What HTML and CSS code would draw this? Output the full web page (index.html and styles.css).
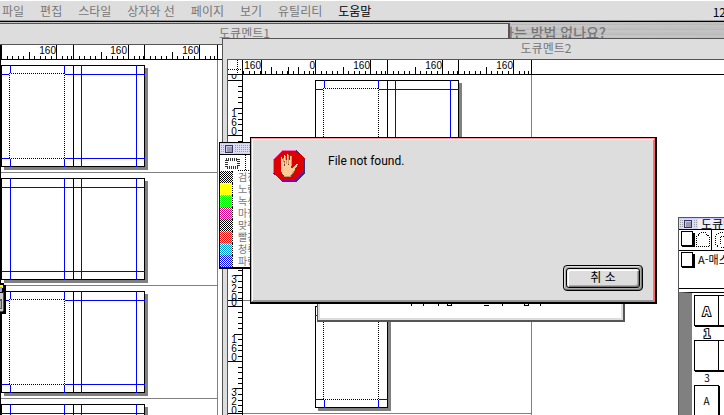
FILE: index.html
```html
<!DOCTYPE html>
<html lang="ko">
<head>
<meta charset="utf-8">
<title>도큐멘트</title>
<link rel="stylesheet" href="styles.css">
</head>
<body>
<svg class="defs" width="0" height="0" aria-hidden="true">
  <defs>
    <!-- horizontal ruler, one page wide -->
    <g id="hticks"><path class="ink" d="M.5 0V15M6.5 11V15M11.5 11V15M17.5 11V15M22.5 11V15M28.5 7V15M33.5 11V15M39.5 11V15M44.5 11V15M50.5 11V15M55.5 0V15M61.5 11V15M66.5 11V15M70.5 11V15"/></g>
    <!-- vertical ruler, one page high -->
    <g id="vticks"><path class="ink" d="M0 .5H14M10 6.5H14M10 11.5H14M10 17.5H14M10 22.5H14M6 28.5H14M10 33.5H14M10 39.5H14M10 44.5H14M10 50.5H14M0 55.5H14M10 61.5H14M10 66.5H14M10 72.5H14M10 77.5H14M6 82.5H14M10 88.5H14M10 94.5H14M10 99.5H14M10 105.5H14M0 107.5H14"/>
      <g class="num"><text x="6" y="37">1</text><text x="6" y="46">6</text><text x="6" y="55">0</text><text x="6" y="90">3</text><text x="6" y="99">2</text><text x="6" y="108">0</text></g></g>
    <g id="sheet"><path fill="#808080" d="M3 3H147V105H3z"/><path fill="#fff" d="M0 0H144V102H0z"/><path class="ink" d="M.5 .5H143.5V101.5H.5zM72.5 0V102"/></g>
    <g id="spread"><use href="#sheet"/><path class="guide" d="M9.5 0V102M63.5 0V102M80.5 0V102M135.5 0V102M0 9.5H144M0 93.5H144"/></g>
    <g id="leftguides"><path class="guide" d="M9.5 0V8M63.5 0V8M9.5 94V102M63.5 94V102M0 9.5H8M0 93.5H8"/><path class="dots" d="M8 8.5H64M8 93.5H64M8.5 8V94M63.5 8V94"/></g>
    <g id="framed"><use href="#sheet"/><use href="#leftguides"/><path class="guide" d="M80.5 0V102M135.5 0V102M64 9.5H144M64 93.5H144"/></g>
    <g id="single"><path fill="#808080" d="M3 3H76V105H3z"/><path fill="#fff" d="M0 0H73V102H0z"/><path class="ink" d="M.5 .5H72.5V101.5H.5z"/><use href="#leftguides"/><path class="guide" d="M64 9.5H73M64 93.5H73"/></g>
  </defs>
</svg>

<nav class="menubar">
  <button>파일</button><button>편집</button><button>스타일</button><button>상자와 선</button><button>페이지</button><button>보기</button><button>유틸리티</button><button class="active">도움말</button>
  <span class="clock">12</span>
</nav>

<main class="desktop">
  <p class="banner">하는 방법 없나요?</p>

  <section class="window doc1">
    <h2 class="title">도큐멘트1</h2>
    <svg class="ruler" height="15" width="222">
      <use href="#hticks" x="1"/><use href="#hticks" x="73"/><use href="#hticks" x="144"/>
      <path fill="#fff" d="M218 0H222V15H218z"/>
      <g class="num end"><text x="56" y="9">160</text><text x="127" y="9">160</text><text x="199" y="9">160</text></g>
      <path class="ink" d="M0 14.5H222M.5 0V15M217.5 0V15"/>
    </svg>
    <svg class="canvas" width="222" height="356">
      <path class="rule" d="M217.5 0V356M0 112.5H217M0 225.5H217M0 338.5H217"/>
      <use href="#framed" x="1" y="5"/><use href="#spread" x="1" y="118"/><use href="#framed" x="1" y="231"/><use href="#spread" x="1" y="344"/>
      <path class="ink" d="M.5 0V356"/>
      <g><path fill="#000" d="M0 223H4V225H6V254H0z"/><path fill="#ff0" d="M0 225H3V228H0z"/><path fill="#99f" d="M0 227H2V232H0z"/><path fill="#ccc" d="M0 233H3V251H0z"/><path fill="#33f" d="M3 232H4V251H3z"/><path fill="#f00" d="M0 251H3V252H0z"/><path fill="#555" d="M0 239H2V249H0z"/><path fill="#aaa" d="M0 241H1V248H0z"/></g>
    </svg>
  </section>

  <section class="window doc2">
    <h2 class="title">도큐멘트2</h2>
    <div class="pane">
      <svg class="corner" width="15" height="15"><path class="dots" d="M0 9.5H14M9.5 0V14"/><path class="ink" d="M0 14.5H15M14.5 0V15"/></svg>
      <div class="hruler"><svg width="290" height="15">
        <use href="#hticks" x="0"/><use href="#hticks" x="72"/><use href="#hticks" x="144"/><use href="#hticks" x="215"/>
        <path fill="#fff" d="M0 0H17V11H0zM19 0H71V7H19z"/>
        <path class="ink" d="M18.5 0V15M45.5 7V15M288.5 0V15"/>
        <g class="num end"><text x="18" y="9">160</text><text x="72" y="9">0</text><text x="127" y="9">160</text><text x="199" y="9">160</text><text x="270" y="9">160</text></g>
      </svg></div>
      <svg class="vruler" width="15" height="340">
        <g class="num"><text x="6" y="4">0</text><text x="6" y="231">0</text></g>
        <use href="#vticks" y="5"/><use href="#vticks" y="118"/><use href="#vticks" y="231"/>
        <path class="ink" d="M14.5 0V340"/>
      </svg>
      <svg class="canvas" width="290" height="340">
        <path class="rule" d="M288.5 0V340M0 225.5H288M0 338.5H288"/>
        <use href="#framed" x="72" y="5"/><use href="#single" x="72" y="231"/>
      </svg>
    </div>
  </section>

  <section class="palette colors">
    <header class="grip"><button class="close" aria-label="색상 팔레트 닫기"></button></header>
    <div class="tools"><svg width="30" height="16"><path class="thick" d="M6 4H18V12H6z"/><path class="dots" d="M25.5 0V16M18 15.5H30"/></svg></div>
    <ul>
      <li><i class="black"></i>검정</li><li><i class="yellow"></i>노랑</li><li><i class="green"></i>녹색</li><li><i class="magenta"></i>마젠타</li><li><i class="black"></i>맞춰</li><li><i class="red"></i>빨강</li><li><i class="cyan"></i>청록</li><li><i class="blue"></i>파랑</li>
    </ul>
  </section>

  <section class="window sheetbox">
    <svg width="300" height="14"><path class="ink" d="M71 .5H74M76 .5H78M91.5 0V3M103.500 0V3M118.5 0V3M119 .5H121M127.5 0V2.500H131.5V0M151 .5H153M155 .5H157M164 2.500H169M182.500 0V3M204.5 0V2.500H208.5V0M220.500 0V3M237 .5H238"/></svg>
  </section>

  <section class="palette layout">
    <header class="grip"><button class="close" aria-label="문서 배치 닫기"></button><b>도큐멘트2</b></header>
    <div class="icons"><svg width="60" height="20">
      <path fill="#000" d="M3 3H16V17H3z"/><path fill="#fff" stroke="#000" d="M2.500 1.500H13.500V15.500H2.500z"/>
      <path class="dotbox" d="M17.500 16.500V6.500L22.500 2.500H26.500L30.500 7.500V16.500z"/>
      <path class="ink" d="M32.500 0V20"/><path class="dotbox" d="M36.500 14.500V5.500L40.500 2.500H50M36.500 14.500L40.500 17.500H50M41.500 14V6.500H50"/></svg></div>
    <div class="master"><svg width="16" height="17"><path fill="#000" d="M3 3H16V17H3z"/><path fill="#fff" stroke="#000" d="M2.500 1.500H13.500V15.500H2.500z"/></svg><span>A-매스터</span></div>
    <div class="pages">
      <figure><div class="leafs"><span class="outline">A</span><span></span></div><figcaption class="outline">1</figcaption></figure>
      <figure><div class="leafs"><span></span><span></span></div><figcaption>3</figcaption></figure>
      <figure><div class="leafs"><span>A</span></div></figure>
    </div>
  </section>

  <section class="dialog" role="alertdialog" aria-labelledby="msg">
    <div class="face">
      <div class="alert">
        <svg width="32" height="32" viewBox="0 0 32 32">
          <path fill="#d00" d="M9 0H23L32 9V23L23 32H9L0 23V9z"/>
          <path fill="none" stroke="#f6b" d="M.5 23V9.500L9.500 .5H23"/>
          <path fill="none" stroke="#337" d="M23 .5L31.500 9.500V22.500L22.500 31.500H9"/>
          <path fill="none" stroke="#909" d="M.5 23L9 30.500H22L30.500 22"/>
          <path fill="#643" d="M8 7H10L11 14V5H13L14 13V4H16V13L17 5H19V15L20 18L23 14H25V16L22 21L19 26L17 27H11L9 25L8 20z"/>
          <path fill="#fc9" d="M8 7H9L11 14V16L12 16L11 5H12L14 14L14 4H15V15H16L17 6H18L18 17L19 19L23 14H25L21 21L18 25L16 26H11L9 24L8 19z"/>
          <path fill="none" stroke="#c96" d="M10 8L11.500 14M12.500 6L13.500 14M15.500 5V14M18.500 6V16M11 26.500H17L22 20"/>
        </svg>
        <p id="msg">File not found.</p>
      </div>
      <button class="cancel"><span>취 소</span></button>
    </div>
  </section>
</main>
</body>
</html>
```

FILE: styles.css
```css
* { box-sizing: border-box; }
body {
  margin: 0;
  height: 100vh;
  overflow: hidden;
  background: #fff;
  color: #000;
  font: 12px/18px "Noto Sans CJK KR", sans-serif;
}
button { font: inherit; color: inherit; padding: 0; border: 0; background: none; }
h2, p, ul, figure { margin: 0; padding: 0; font-size: 12px; font-weight: 400; }
svg { display: block; flex: none; shape-rendering: crispEdges; }
.defs { position: absolute; }
.ink { stroke: #000; fill: none; }
.guide { stroke: #00f; fill: none; }
.rule { stroke: #808080; fill: none; }
.dots, .dotbox { stroke: #000; fill: none; stroke-dasharray: 1 1; }
.thick { stroke: #333; stroke-width: 3; stroke-dasharray: 1 1; stroke-linejoin: round; fill: none; }
.num { font: 10px "Liberation Sans", sans-serif; text-anchor: middle; }
.num.end { text-anchor: end; }

.menubar {
  display: flex;
  gap: 16px;
  height: 22px;
  padding: 1px 0 0 2px;
  border-top: 1px solid #fff;
  border-bottom: 1px solid #000;
  background: #ddd;
  box-shadow: inset 0 -1px #999;
  color: #777;
}
.menubar button { white-space: nowrap; height: 18px; }
.menubar .active { color: #000; }
.clock { margin-left: auto; margin-right: -2px; color: #000; line-height: 20px; }

.desktop { position: absolute; top: 22px; right: 0; bottom: 0; left: 0; overflow: hidden; background: #ccc; }
.banner {
  height: 16px;
  padding-left: 501px;
  overflow: hidden;
  background: linear-gradient(90deg, #ddd0 510px, #bbb8 724px), repeating-linear-gradient(#c4c4c4 0 2px, #b8b8b8 2px 3px, #cacaca 3px 5px);
  color: #777;
  font-size: 14px;
  font-weight: 500;
  line-height: 20px;
}
.window { position: absolute; overflow: hidden; background: #fff; border: 1px solid #555; }
.title { height: 20px; line-height: 18px; background: #ddd; color: #777; text-align: center; }
.doc1 { left: 0; top: 1px; bottom: 0; width: 510px; border-width: 1px 2px 0 0; }
.doc1 .title { height: 21px; padding-right: 19px; border-bottom: 1px solid #555; }
.doc2 { left: 222px; right: 0; top: 16px; bottom: 0; border-width: 1px 0 0 1px; background: #ddd; }
.doc2 .title { padding-left: 145px; }
.pane {
  display: grid;
  grid-template: 15px 1fr / 15px 1fr;
  height: calc(100% - 20px);
  margin-left: 4px;
  border: solid #555;
  border-width: 1px 0 0 1px;
  background: #fff;
}
.hruler { border-bottom: 1px solid #000; overflow: hidden; }

.palette { position: absolute; overflow: hidden; background: #fff; border: 1px solid #000; }
.grip {
  display: flex;
  align-items: center;
  gap: 6px;
  height: 12px;
  padding-left: 5px;
  border-bottom: 1px solid #000;
  background: conic-gradient(#999 25%, #ddddf4 0) 0 0 / 2px 2px;
  box-shadow: inset 0 1px #ccf, inset 0 -1px #ccf;
}
.close { flex: none; width: 8px; height: 8px; border: 1px solid #336; background: #99a; box-shadow: inset 1px 1px #ccd, 0 0 0 1px #ddf; }
.colors { left: 219px; top: 120px; width: 60px; height: 127px; border-width: 1px 1px 2px; }
.colors ul { list-style: none; }
.colors li { display: flex; gap: 5px; height: 12px; line-height: 12px; font-size: 10px; overflow: hidden; white-space: nowrap; color: #777; }
.colors i { width: 13px; height: 12px; border-right: 1px dotted #000; background: repeating-conic-gradient(var(--c) 0 25%, #fff 0 50%) 0 0 / 2px 2px; }
.black { --c: #000; }
.yellow { --c: #ff0; }
.green { --c: #0f0; }
.magenta { --c: #d08; }
.red { --c: #f00; }
.cyan { --c: #09c; }
.blue { --c: #00f; }

.sheetbox { left: 317px; top: 272px; width: 308px; height: 28px; border-width: 1px 2px 2px 1px; padding: 8px 0 0 2px; box-shadow: inset 2px 0 #ddd, inset -2px -2px #ddd; }

.layout { left: 678px; top: 195px; right: 0; bottom: 0; border-width: 1px 0 0 1px; border-color: #555; display: flex; flex-direction: column; }
.grip b { padding-left: 3px; background: #eef; font-weight: 400; line-height: 10px; white-space: nowrap; }
.layout .grip, .icons, .master { flex: none; }
.icons { height: 21px; border-bottom: 1px solid #000; }
.master { display: flex; gap: 3px; height: 38px; border-bottom: 1px solid #000; font-size: 11px; line-height: 17px; white-space: nowrap; }
.pages { flex: 1; min-height: 0; margin-top: 3px; padding: 2px 0 0 2px; border-left: 13px solid #808080; border-top: 1px solid #000; }
.pages figure { height: 45px; width: 50px; font-size: 10px; }
.leafs { display: flex; height: 31px; }
.leafs span { width: 25px; margin-right: -1px; border: 1px solid #000; box-shadow: 1px 1px #000; background: #fff; text-align: center; line-height: 29px; }
.pages figcaption { width: 26px; line-height: 14px; text-align: center; }
.pages .outline { color: #fff; font-size: 12px; font-weight: 700; -webkit-text-stroke: 2px #000; paint-order: stroke fill; }

.dialog { position: absolute; left: 250px; top: 115px; width: 407px; border: solid #000; border-width: 1px 2px 2px 1px; }
.face {
  display: flex;
  flex-direction: column;
  justify-content: space-between;
  height: 164px;
  padding: 11px 11px 10px 21px;
  border: 1px solid #f99;
  border-color: #f99 #f66 #f66 #f99;
  background: #ddd;
  box-shadow: inset 1px 1px #fff, inset -1px -1px #999;
}
.alert { display: flex; gap: 23px; }
.alert p { padding-top: 2px; font: 12px/18px Roboto, sans-serif; }
.cancel {
  align-self: flex-end;
  width: 80px;
  height: 26px;
  padding: 2px;
  border: 1px solid #000;
  border-radius: 4px;
  background: #aaa;
  box-shadow: inset 1px 1px #ddd, inset -1px -1px #777;
}
.cancel span {
  display: block;
  height: 20px;
  border: 1px solid #000;
  border-radius: 3px;
  background: #ddd;
  box-shadow: inset 1px 1px #eee, inset 2px 2px #fff, inset -1px -1px #777, inset -2px -2px #aaa;
  line-height: 16px;
}
```
